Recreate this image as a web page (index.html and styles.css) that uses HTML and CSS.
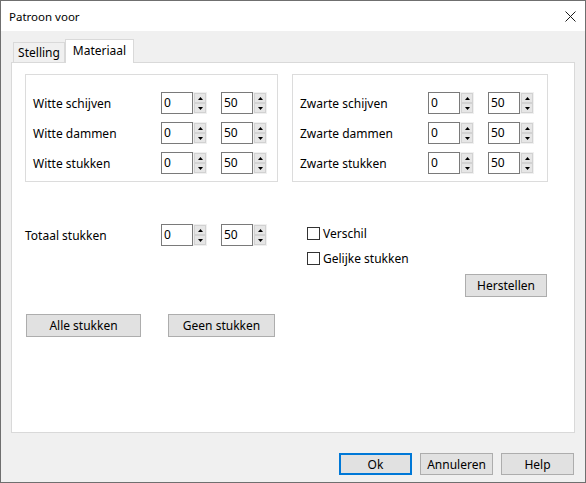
FILE: index.html
```html
<!DOCTYPE html>
<html lang="nl">
<head>
<meta charset="utf-8">
<title>Patroon voor</title>
<link rel="stylesheet" href="styles.css">
</head>
<body>
<div class="window">
  <div class="titlebar">
    <span class="title">Patroon voor</span>
    <svg class="close" width="11" height="11" viewBox="0 0 11 11"><path d="M0.5 0.5L10.5 10.5M10.5 0.5L0.5 10.5" stroke="#1a1a1a" stroke-width="1"/></svg>
  </div>
  <div class="main">
    <div class="tabs">
      <div class="tab">Stelling</div>
      <div class="tab active">Materiaal</div>
    </div>
    <div class="panel">
      <div class="groups">
        <div class="group g1">
          <div class="row">
            <span class="label">Witte schijven</span>
            <div class="spin"><div class="edit">0</div><div class="arrows"><span class="arrow"><svg width="5" height="3" viewBox="0 0 5 3"><path d="M0 3L2.5 0L5 3Z" fill="#000"/></svg></span><span class="arrow"><svg width="5" height="3" viewBox="0 0 5 3"><path d="M0 0L2.5 3L5 0Z" fill="#000"/></svg></span></div></div>
            <div class="spin"><div class="edit">50</div><div class="arrows"><span class="arrow"><svg width="5" height="3" viewBox="0 0 5 3"><path d="M0 3L2.5 0L5 3Z" fill="#000"/></svg></span><span class="arrow"><svg width="5" height="3" viewBox="0 0 5 3"><path d="M0 0L2.5 3L5 0Z" fill="#000"/></svg></span></div></div>
          </div>
          <div class="row">
            <span class="label">Witte dammen</span>
            <div class="spin"><div class="edit">0</div><div class="arrows"><span class="arrow"><svg width="5" height="3" viewBox="0 0 5 3"><path d="M0 3L2.5 0L5 3Z" fill="#000"/></svg></span><span class="arrow"><svg width="5" height="3" viewBox="0 0 5 3"><path d="M0 0L2.5 3L5 0Z" fill="#000"/></svg></span></div></div>
            <div class="spin"><div class="edit">50</div><div class="arrows"><span class="arrow"><svg width="5" height="3" viewBox="0 0 5 3"><path d="M0 3L2.5 0L5 3Z" fill="#000"/></svg></span><span class="arrow"><svg width="5" height="3" viewBox="0 0 5 3"><path d="M0 0L2.5 3L5 0Z" fill="#000"/></svg></span></div></div>
          </div>
          <div class="row">
            <span class="label">Witte stukken</span>
            <div class="spin"><div class="edit">0</div><div class="arrows"><span class="arrow"><svg width="5" height="3" viewBox="0 0 5 3"><path d="M0 3L2.5 0L5 3Z" fill="#000"/></svg></span><span class="arrow"><svg width="5" height="3" viewBox="0 0 5 3"><path d="M0 0L2.5 3L5 0Z" fill="#000"/></svg></span></div></div>
            <div class="spin"><div class="edit">50</div><div class="arrows"><span class="arrow"><svg width="5" height="3" viewBox="0 0 5 3"><path d="M0 3L2.5 0L5 3Z" fill="#000"/></svg></span><span class="arrow"><svg width="5" height="3" viewBox="0 0 5 3"><path d="M0 0L2.5 3L5 0Z" fill="#000"/></svg></span></div></div>
          </div>
        </div>
        <div class="group g2">
          <div class="row">
            <span class="label">Zwarte schijven</span>
            <div class="spin"><div class="edit">0</div><div class="arrows"><span class="arrow"><svg width="5" height="3" viewBox="0 0 5 3"><path d="M0 3L2.5 0L5 3Z" fill="#000"/></svg></span><span class="arrow"><svg width="5" height="3" viewBox="0 0 5 3"><path d="M0 0L2.5 3L5 0Z" fill="#000"/></svg></span></div></div>
            <div class="spin"><div class="edit">50</div><div class="arrows"><span class="arrow"><svg width="5" height="3" viewBox="0 0 5 3"><path d="M0 3L2.5 0L5 3Z" fill="#000"/></svg></span><span class="arrow"><svg width="5" height="3" viewBox="0 0 5 3"><path d="M0 0L2.5 3L5 0Z" fill="#000"/></svg></span></div></div>
          </div>
          <div class="row">
            <span class="label">Zwarte dammen</span>
            <div class="spin"><div class="edit">0</div><div class="arrows"><span class="arrow"><svg width="5" height="3" viewBox="0 0 5 3"><path d="M0 3L2.5 0L5 3Z" fill="#000"/></svg></span><span class="arrow"><svg width="5" height="3" viewBox="0 0 5 3"><path d="M0 0L2.5 3L5 0Z" fill="#000"/></svg></span></div></div>
            <div class="spin"><div class="edit">50</div><div class="arrows"><span class="arrow"><svg width="5" height="3" viewBox="0 0 5 3"><path d="M0 3L2.5 0L5 3Z" fill="#000"/></svg></span><span class="arrow"><svg width="5" height="3" viewBox="0 0 5 3"><path d="M0 0L2.5 3L5 0Z" fill="#000"/></svg></span></div></div>
          </div>
          <div class="row">
            <span class="label">Zwarte stukken</span>
            <div class="spin"><div class="edit">0</div><div class="arrows"><span class="arrow"><svg width="5" height="3" viewBox="0 0 5 3"><path d="M0 3L2.5 0L5 3Z" fill="#000"/></svg></span><span class="arrow"><svg width="5" height="3" viewBox="0 0 5 3"><path d="M0 0L2.5 3L5 0Z" fill="#000"/></svg></span></div></div>
            <div class="spin"><div class="edit">50</div><div class="arrows"><span class="arrow"><svg width="5" height="3" viewBox="0 0 5 3"><path d="M0 3L2.5 0L5 3Z" fill="#000"/></svg></span><span class="arrow"><svg width="5" height="3" viewBox="0 0 5 3"><path d="M0 0L2.5 3L5 0Z" fill="#000"/></svg></span></div></div>
          </div>
        </div>
      </div>
      <div class="middle">
        <div class="total">
          <div class="row total-row">
            <span class="label">Totaal stukken</span>
            <div class="spin"><div class="edit">0</div><div class="arrows"><span class="arrow"><svg width="5" height="3" viewBox="0 0 5 3"><path d="M0 3L2.5 0L5 3Z" fill="#000"/></svg></span><span class="arrow"><svg width="5" height="3" viewBox="0 0 5 3"><path d="M0 0L2.5 3L5 0Z" fill="#000"/></svg></span></div></div>
            <div class="spin"><div class="edit">50</div><div class="arrows"><span class="arrow"><svg width="5" height="3" viewBox="0 0 5 3"><path d="M0 3L2.5 0L5 3Z" fill="#000"/></svg></span><span class="arrow"><svg width="5" height="3" viewBox="0 0 5 3"><path d="M0 0L2.5 3L5 0Z" fill="#000"/></svg></span></div></div>
          </div>
        </div>
        <div class="options">
          <div class="check"><span class="box"></span><span>Verschil</span></div>
          <div class="check second"><span class="box"></span><span>Gelijke stukken</span></div>
          <div class="btn herstellen">Herstellen</div>
        </div>
      </div>
      <div class="actions">
        <div class="btn alle">Alle stukken</div>
        <div class="btn geen">Geen stukken</div>
      </div>
    </div>
  </div>
  <div class="footer">
    <div class="btn dlg default">Ok</div>
    <div class="btn dlg">Annuleren</div>
    <div class="btn dlg">Help</div>
  </div>
</div>
</body>
</html>
```

FILE: styles.css
```css
* { box-sizing: border-box; }

html, body {
  margin: 0;
  padding: 0;
  background: #f0f0f0;
}

body {
  font-family: "Noto Sans", "DejaVu Sans", sans-serif;
  font-size: 12px;
  color: #000;
}

.window {
  width: 586px;
  height: 483px;
  border: 1px solid #6f6f6f;
  background: #f0f0f0;
  display: flex;
  flex-direction: column;
  overflow: hidden;
}

.titlebar {
  height: 30px;
  flex: none;
  background: #fff;
  display: flex;
  align-items: center;
  justify-content: space-between;
  padding: 0 9px 0 8px;
}

.title {
  font-size: 11.5px;
}

.close {
  display: block;
}

.main {
  padding: 8px 10px 0 10px;
  flex: none;
}

.tabs {
  display: flex;
  align-items: flex-end;
  height: 23px;
  padding-left: 2px;
}

.tab {
  height: 20px;
  width: 52px;
  border: 1px solid #d9d9d9;
  border-bottom: none;
  background: #f0f0f0;
  display: flex;
  align-items: center;
  justify-content: center;
  padding-bottom: 1px;
}

.tab.active {
  position: relative;
  z-index: 1;
  height: 24px;
  width: 69px;
  margin-bottom: -1px;
  background: #fff;
  padding-bottom: 2px;
}

.panel {
  height: 371px;
  background: #fff;
  border: 1px solid #d9d9d9;
  padding: 11px 0 0 13px;
}

.groups {
  display: flex;
  gap: 14px;
}

.group {
  border: 1px solid #dcdcdc;
  height: 108px;
  padding: 17px 0 0 7px;
  display: flex;
  flex-direction: column;
  gap: 8px;
}

.g1 { width: 253px; }
.g2 { width: 256px; }

.row {
  display: grid;
  grid-template-columns: 114px 46px 46px;
  column-gap: 14px;
  align-items: center;
  height: 22px;
}

.total-row {
  grid-template-columns: 122px 46px 46px;
}

.spin {
  display: flex;
  height: 22px;
}

.edit {
  width: 32px;
  height: 22px;
  border: 1px solid #7a7a7a;
  background: #fff;
  padding-left: 2px;
  line-height: 20px;
}

.arrows {
  width: 14px;
  height: 22px;
  padding: 1px;
  background: #f0f0f0;
  display: flex;
  flex-direction: column;
}

.arrow {
  height: 10px;
  background: #e6e6e6;
  border: 1px solid #d2d2d2;
  display: flex;
  align-items: center;
  justify-content: center;
}

.arrow svg { display: block; }

.middle {
  display: flex;
  margin-top: 42px;
}

.total {
  width: 282px;
}

.options {
  width: 240px;
  padding-top: 3px;
  display: flex;
  flex-direction: column;
}

.check {
  display: flex;
  align-items: center;
  height: 13px;
  gap: 3px;
}

.check.second {
  margin-top: 12px;
}

.box {
  width: 13px;
  height: 13px;
  border: 1px solid #333;
  background: #fff;
}

.btn {
  background: #e1e1e1;
  border: 1px solid #adadad;
  height: 23px;
  display: flex;
  align-items: center;
  justify-content: center;
}

.herstellen {
  width: 82px;
  margin-top: 9px;
  align-self: flex-end;
}

.actions {
  display: flex;
  margin-top: 17px;
  padding-left: 1px;
  gap: 27px;
}

.alle { width: 115px; }
.geen { width: 107px; }

.footer {
  display: flex;
  justify-content: flex-end;
  gap: 8px;
  padding: 20px 11px 0 0;
}

.btn.dlg {
  width: 73px;
  height: 22px;
}

.btn.default {
  border: 2px solid #0078d7;
}
```
